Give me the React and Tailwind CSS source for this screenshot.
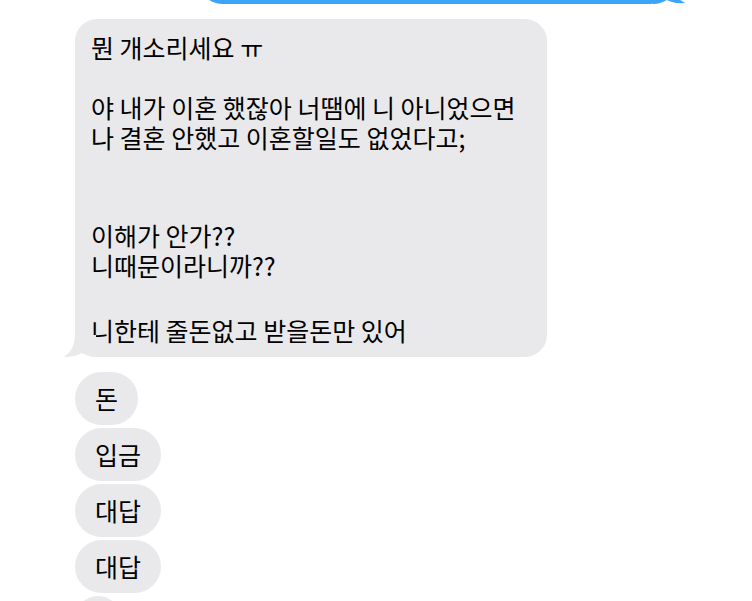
import React from 'react';

const GRAY = '#e9e9eb';
const BLUE = '#3ba3f8';

const LeftTail = () => (
  <svg
    className="absolute left-[-11px] bottom-0"
    width="32"
    height="22"
    viewBox="0 0 32 22"
  >
    <path d="M11 0 C11 10 7 17 0 22 C8 22 14 20 18 18 C22 20 26 22 32 22 L32 0 Z" fill={GRAY} />
  </svg>
);

const RightTail = () => (
  <svg
    className="absolute right-[-13px] bottom-0"
    width="32"
    height="22"
    viewBox="0 0 32 22"
  >
    <path d="M19 0 C19 10 24 17 32 21 C24 22 18 20 14 18 C10 20 6 22 0 22 L0 0 Z" fill={BLUE} />
  </svg>
);

const Line = ({ children }) => <div className="h-[30px] leading-[30px] whitespace-nowrap">{children}</div>;

const Chip = ({ text }) => (
  <div className="self-start h-[53px] px-[20px] rounded-full bg-[#e9e9eb] flex items-center text-[25px] text-black">
    {text}
  </div>
);

const App = () => {
  const chips = ['돈', '입금', '대답', '대답', ''];

  return (
    <div
      className="w-[752px] h-[601px] overflow-hidden bg-white flex flex-col"
      style={{ fontFamily: '"Noto Sans CJK KR", "Noto Sans", sans-serif' }}
    >
      {/* outgoing bubble, mostly scrolled off */}
      <div className="relative ml-[200px] mt-[-40px] w-[472px] h-[44px] shrink-0 rounded-[22px] bg-[#3ba3f8]">
        <RightTail />
      </div>

      {/* incoming long message */}
      <div className="relative ml-[75px] mt-[15px] w-[472px] h-[338px] shrink-0 rounded-[22px] bg-[#e9e9eb] pl-[16px] pt-[13px] text-[25px] text-black">
        <Line>뭔 개소리세요 ㅠ</Line>
        <div className="h-[30px]" />
        <Line>야 내가 이혼 했잖아 너땜에 니 아니었으면</Line>
        <Line>나 결혼 안했고 이혼할일도 없었다고;</Line>
        <div className="h-[68px]" />
        <Line>이해가 안가??</Line>
        <Line>니때문이라니까??</Line>
        <div className="h-[35px]" />
        <Line>니한테 줄돈없고 받을돈만 있어</Line>
        <LeftTail />
      </div>

      {/* short replies */}
      <div className="ml-[75px] mt-[15px] flex flex-col gap-[3px]">
        {chips.map((c, i) => (
          <Chip key={i} text={c || '\u00a0'} />
        ))}
      </div>
    </div>
  );
};

export default App;
